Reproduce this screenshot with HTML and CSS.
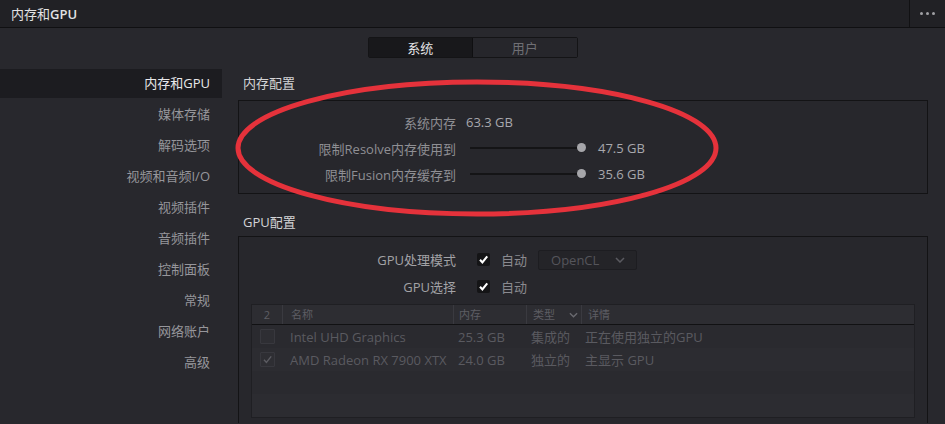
FILE: index.html
```html
<!DOCTYPE html>
<html lang="zh-CN">
<head>
    <meta charset="UTF-8">
    <meta name="viewport" content="width=device-width, initial-scale=1.0">
    <title>内存和GPU</title>
    <link rel="stylesheet" href="styles.css">
</head>
<body>
    <div class="titlebar">
        <div class="title">内存和<b>GPU</b></div>
        <div class="more"><span></span><span></span><span></span></div>
    </div>

    <div class="tabs">
        <div class="tab active">系统</div>
        <div class="tab">用户</div>
    </div>

    <div class="main">
        <div class="sidebar">
            <div class="nav-item active">内存和GPU</div>
            <div class="nav-item">媒体存储</div>
            <div class="nav-item">解码选项</div>
            <div class="nav-item">视频和音频I/O</div>
            <div class="nav-item">视频插件</div>
            <div class="nav-item">音频插件</div>
            <div class="nav-item">控制面板</div>
            <div class="nav-item">常规</div>
            <div class="nav-item">网络账户</div>
            <div class="nav-item">高级</div>
        </div>

        <div class="content">
            <div class="section-title">内存配置</div>
            <div class="panel mem-panel">
                <div class="row">
                    <div class="label">系统内存</div>
                    <div class="value">63.3 GB</div>
                </div>
                <div class="row">
                    <div class="label">限制Resolve内存使用到</div>
                    <div class="slider"><div class="knob"></div></div>
                    <div class="value">47.5 GB</div>
                </div>
                <div class="row">
                    <div class="label">限制Fusion内存缓存到</div>
                    <div class="slider"><div class="knob"></div></div>
                    <div class="value">35.6 GB</div>
                </div>
            </div>

            <div class="section-title gpu-title">GPU配置</div>
            <div class="panel gpu-panel">
                <div class="row gpu-row">
                    <div class="label">GPU处理模式</div>
                    <div class="check"><svg viewBox="0 0 13 13" width="13" height="13"><path d="M3 6.8 L5.4 9.4 L10.2 3.4" fill="none" stroke="#fff" stroke-width="2.1"/></svg></div>
                    <div class="auto">自动</div>
                    <div class="select">OpenCL
                        <svg viewBox="0 0 10 6" width="10" height="6"><path d="M1 1 L5 5 L9 1" fill="none" stroke="#5a5a60" stroke-width="1.5"/></svg>
                    </div>
                </div>
                <div class="row gpu-row">
                    <div class="label">GPU选择</div>
                    <div class="check"><svg viewBox="0 0 13 13" width="13" height="13"><path d="M3 6.8 L5.4 9.4 L10.2 3.4" fill="none" stroke="#fff" stroke-width="2.1"/></svg></div>
                    <div class="auto">自动</div>
                </div>

                <div class="table">
                    <div class="thead">
                        <div class="c-num">2</div>
                        <div class="c-name">名称</div>
                        <div class="c-mem">内存</div>
                        <div class="c-type">类型
                            <svg viewBox="0 0 10 6" width="9" height="6"><path d="M1 1 L5 5 L9 1" fill="none" stroke="#6a6a70" stroke-width="1.5"/></svg>
                        </div>
                        <div class="c-info">详情</div>
                    </div>
                    <div class="trow">
                        <div class="c-num"><span class="box"></span></div>
                        <div class="c-name">Intel UHD Graphics</div>
                        <div class="c-mem">25.3 GB</div>
                        <div class="c-type">集成的</div>
                        <div class="c-info">正在使用独立的GPU</div>
                    </div>
                    <div class="trow alt">
                        <div class="c-num"><span class="box"><svg viewBox="0 0 13 13" width="13" height="13"><path d="M3 6.8 L5.4 9.4 L10.2 3.4" fill="none" stroke="#5c5c62" stroke-width="1.4"/></svg></span></div>
                        <div class="c-name">AMD Radeon RX 7900 XTX</div>
                        <div class="c-mem">24.0 GB</div>
                        <div class="c-type">独立的</div>
                        <div class="c-info">主显示 GPU</div>
                    </div>
                    <div class="trow empty"></div>
                    <div class="trow empty alt"></div>
                </div>
            </div>
        </div>
    </div>

    <svg class="mark" width="945" height="424" viewBox="0 0 945 424">
        <ellipse cx="477" cy="148" rx="239" ry="66" fill="none" stroke="#e5323b" stroke-width="5"/>
    </svg>
</body>
</html>
```

FILE: styles.css
```css
body {
    margin: 0;
    width: 945px;
    height: 424px;
    overflow: hidden;
    background-color: #28282d;
    font-family: "Open Sans", "Noto Sans CJK SC", sans-serif;
    font-size: 13px;
    color: #9a9a9f;
    position: relative;
}

.titlebar {
    height: 27px;
    display: flex;
    align-items: center;
    background-color: #212125;
    border-bottom: 1px solid #101012;
}

.title {
    flex: 1;
    padding-left: 11px;
    color: #e2e2e4;
}

.title b {
    font-weight: 600;
}

.more {
    width: 35px;
    height: 27px;
    border-left: 1px solid #111113;
    display: flex;
    align-items: center;
    justify-content: center;
    gap: 3px;
}

.more span {
    width: 3px;
    height: 3px;
    border-radius: 50%;
    background-color: #a0a0a4;
}

.tabs {
    display: flex;
    width: 210px;
    margin: 9px auto 0;
    height: 21px;
    border: 1px solid #141416;
    border-radius: 2px;
    box-sizing: border-box;
}

.tab {
    flex: 1;
    display: flex;
    align-items: center;
    justify-content: center;
    color: #6f6f74;
    background-color: #26262b;
}

.tab.active {
    color: #e4e4e6;
    background-color: #18181b;
    border-right: 1px solid #0f0f11;
}

.main {
    display: flex;
    margin-top: 11px;
}

.sidebar {
    width: 222px;
    flex-shrink: 0;
}

.nav-item {
    height: 31px;
    line-height: 29px;
    text-align: right;
    padding-right: 12px;
    color: #96969b;
}

.nav-item.active {
    height: 29px;
    margin-bottom: 2px;
    background-color: #1c1c20;
    color: #e8e8ea;
}

.content {
    flex: 1;
    padding-left: 16px;
    padding-right: 17px;
}

.section-title {
    height: 31px;
    line-height: 29px;
    padding-left: 5px;
    color: #d4d4d6;
}

.gpu-title {
    margin-top: 11px;
    line-height: 35px;
}

.panel {
    border: 1px solid #131315;
    background-color: #27272c;
}

.mem-panel {
    height: 94px;
    box-sizing: border-box;
    padding-top: 8px;
}

.gpu-panel {
    height: 187px;
    box-sizing: border-box;
    border-bottom: none;
    padding-top: 9px;
    padding-left: 12px;
    padding-right: 12px;
    overflow: hidden;
}

.row {
    display: flex;
    align-items: center;
    height: 26px;
}

.gpu-row {
    height: 27px;
}

.label {
    width: 217px;
    text-align: right;
    color: #8f8f94;
}

.gpu-row .label {
    width: 205px;
    color: #a2a2a6;
}

.value {
    margin-left: 10px;
    color: #a8a8ac;
}

.slider {
    position: relative;
    width: 112px;
    height: 2px;
    margin-left: 14px;
    margin-right: 6px;
    background-color: #141416;
}

.knob {
    position: absolute;
    right: -4px;
    top: -4px;
    width: 9px;
    height: 9px;
    border-radius: 50%;
    background-color: #a6a6aa;
}

.check {
    width: 13px;
    height: 13px;
    margin-left: 21px;
    background-color: #141416;
    border-radius: 2px;
    display: flex;
}

.auto {
    margin-left: 11px;
    color: #8a8a8f;
}

.select {
    margin-left: 11px;
    width: 99px;
    height: 20px;
    box-sizing: border-box;
    border: 1px solid #1d1d21;
    background-color: #242428;
    border-radius: 2px;
    display: flex;
    align-items: center;
    justify-content: space-between;
    padding: 0 11px 0 12px;
    color: #55555b;
}

.table {
    margin-top: 4px;
    border: 1px solid #1f1f23;
    background-color: #2a2a2f;
}

.thead {
    display: flex;
    height: 19px;
    align-items: center;
    background-color: #2d2d32;
    border-bottom: 1px solid #111113;
    font-size: 11px;
    color: #5e5e64;
}

.thead > div {
    height: 19px;
    line-height: 19px;
    border-right: 1px solid #3a3a40;
}

.thead > div:last-child {
    border-right: none;
}

.c-num {
    width: 30px;
    text-align: center;
    flex-shrink: 0;
}

.c-name {
    width: 162px;
    padding-left: 8px;
    flex-shrink: 0;
}

.c-mem {
    width: 66px;
    padding-left: 6px;
    flex-shrink: 0;
}

.thead .c-mem {
    width: 67px;
    padding-left: 5px;
}

.c-type {
    width: 44px;
    padding-left: 7px;
    flex-shrink: 0;
    display: flex;
    align-items: center;
    justify-content: space-between;
    padding-right: 3px;
}

.thead .c-type {
    width: 45px;
    padding-left: 6px;
}

.c-info {
    flex: 1;
    padding-left: 7px;
}

.thead .c-info {
    padding-left: 6px;
}

.trow {
    display: flex;
    align-items: center;
    height: 23px;
    color: #5a5a60;
}

.trow.alt {
    background-color: #2c2c31;
}

.trow .c-type {
    display: block;
}

.box {
    display: inline-flex;
    width: 13px;
    height: 13px;
    margin-top: 3px;
    border: 1px solid #38383e;
    background-color: #2e2e33;
    border-radius: 1px;
}

.mark {
    position: absolute;
    left: 0;
    top: 0;
    pointer-events: none;
}
```
